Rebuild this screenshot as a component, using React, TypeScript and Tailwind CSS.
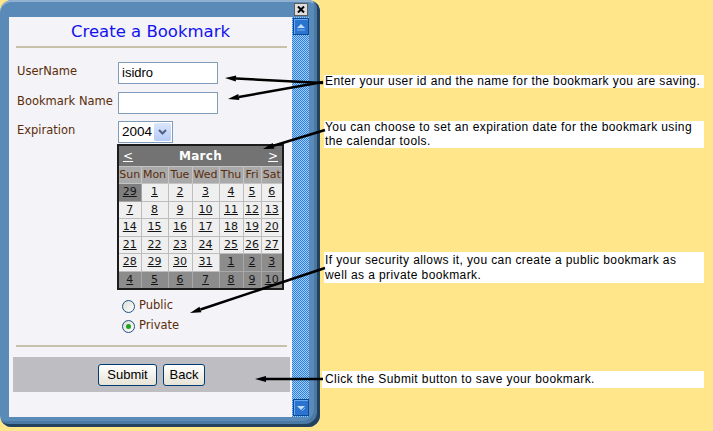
import React from 'react';

const sans = "font-['DejaVu_Sans',Verdana,sans-serif]";
const arial = "font-['Liberation_Sans',Arial,sans-serif]";

type Day = { n: number; other?: boolean; dim?: boolean };

const weeks: Day[][] = [
  [{ n: 29, other: true, dim: true }, { n: 1 }, { n: 2 }, { n: 3 }, { n: 4 }, { n: 5 }, { n: 6 }],
  [{ n: 7 }, { n: 8 }, { n: 9 }, { n: 10 }, { n: 11 }, { n: 12 }, { n: 13 }],
  [{ n: 14 }, { n: 15 }, { n: 16 }, { n: 17 }, { n: 18 }, { n: 19 }, { n: 20 }],
  [{ n: 21 }, { n: 22 }, { n: 23 }, { n: 24 }, { n: 25 }, { n: 26 }, { n: 27 }],
  [{ n: 28 }, { n: 29 }, { n: 30 }, { n: 31 }, { n: 1, other: true }, { n: 2, other: true }, { n: 3, other: true }],
  [4, 5, 6, 7, 8, 9, 10].map((n) => ({ n, other: true })),
];

const dayNames = ['Sun', 'Mon', 'Tue', 'Wed', 'Thu', 'Fri', 'Sat'];
const colWidths = [23, 27, 24, 27, 24, 18, 22];

const Calendar: React.FC = () => (
  <table className={`table-fixed border-collapse border-2 border-[#1c1c1c] ${sans} text-[11px] mt-[1px] -ml-[1px]`}>
    <colgroup>
      {colWidths.map((w, i) => (
        <col key={i} style={{ width: w }} />
      ))}
    </colgroup>
    <thead>
      <tr className="h-[21px] bg-[#737373]">
        <th colSpan={7} className="p-0">
          <div className="flex items-center justify-between px-[4px] text-white">
            <span className="underline text-[12px] font-normal">&lt;</span>
            <span className="font-bold text-[12px] tracking-[0.3px]">March</span>
            <span className="underline text-[12px] font-normal">&gt;</span>
          </div>
        </th>
      </tr>
      <tr className="h-[17px] bg-[#a9a9a9]">
        {dayNames.map((d) => (
          <th key={d} className="p-0 font-normal text-[#5a2c0a] border border-[#c4c4c4] text-center">
            {d}
          </th>
        ))}
      </tr>
    </thead>
    <tbody>
      {weeks.map((w, i) => (
        <tr key={i} className="h-[17px]">
          {w.map((d, j) => (
            <td
              key={j}
              className={`p-0 text-center underline text-[#151515] border ${
                d.dim
                  ? 'bg-[#7f7f7f] border-[#a4a4a4]'
                  : d.other
                  ? 'bg-[#8c8c8c] border-[#a8a8a8]'
                  : 'bg-[#efefef] border-[#bdbdbd]'
              }`}
            >
              {d.n}
            </td>
          ))}
        </tr>
      ))}
    </tbody>
  </table>
);

const Radio: React.FC<{ label: string; checked?: boolean }> = ({ label, checked }) => (
  <div className="flex items-center h-[20px] gap-[4px]">
    <span className="w-[13px] h-[13px] rounded-full border border-[#1d5281] bg-gradient-to-br from-[#dcdcd4] to-white flex items-center justify-center">
      {checked && <span className="w-[5px] h-[5px] rounded-full bg-[#21a121]" />}
    </span>
    <span className={`${sans} text-[11.5px] text-[#5a2c0a]`}>{label}</span>
  </div>
);

const XpButton: React.FC<{ label: string; w: string }> = ({ label, w }) => (
  <button
    className={`${w} h-[22px] rounded-[3px] border border-[#003c74] bg-gradient-to-b from-white to-[#e6e3d6] ${arial} text-[13px] text-black`}
  >
    {label}
  </button>
);

const ScrollButton: React.FC<{ up?: boolean }> = ({ up }) => (
  <div className="w-[16px] h-[17px] bg-[#2a74d0] border border-[#0d4a95] shadow-[inset_1px_1px_0_#6aa8ee] flex items-center justify-center">
    <svg width="10" height="8" viewBox="0 0 10 8">
      {up ? (
        <>
          <polygon points="5,1 9,5 1,5" fill="#bfdcfa" />
          <line x1="1" y1="7" x2="9" y2="7" stroke="#7fb2ea" strokeWidth="1" />
        </>
      ) : (
        <>
          <polygon points="1,2 9,2 5,6" fill="#bfdcfa" />
          <line x1="6" y1="7" x2="9" y2="4" stroke="#7fb2ea" strokeWidth="1" />
        </>
      )}
    </svg>
  </div>
);

const Arrow: React.FC<{ x1: number; y1: number; x2: number; y2: number }> = ({ x1, y1, x2, y2 }) => {
  const a = Math.atan2(y2 - y1, x2 - x1);
  const len = 11;
  const half = 3;
  const bx = x2 - Math.cos(a) * len;
  const by = y2 - Math.sin(a) * len;
  const px = -Math.sin(a) * half;
  const py = Math.cos(a) * half;
  return (
    <g>
      <line x1={x1} y1={y1} x2={bx} y2={by} stroke="#000" strokeWidth="2.5" />
      <polygon points={`${x2},${y2} ${bx + px},${by + py} ${bx - px},${by - py}`} fill="#000" />
    </g>
  );
};

const Note: React.FC<{ className: string; children: React.ReactNode }> = ({ className, children }) => (
  <div className={`bg-white ${arial} text-[12px] tracking-[0.4px] text-black pl-[1px] ${className}`}>{children}</div>
);

export default function App() {
  return (
    <div className="relative w-[713px] h-[431px] bg-[#ffe68a] overflow-hidden flex">
      {/* dialog window */}
      <div className="w-[320px] h-[427px] rounded-[12px] bg-[#5a8ab8] shadow-[inset_-3px_-3px_0_#23405c,inset_-6px_-6px_0_#4b79a5,inset_0_2px_0_#8fb0d0] flex flex-col">
        <div className="h-[17px] flex justify-end pr-[12px] pt-[3px]">
          <div className="w-[14px] h-[13px] bg-[#dedede] border border-[#5c5c5c] flex items-center justify-center">
            <svg width="8" height="7" viewBox="0 0 8 7">
              <path d="M1 0.5 L7 6.5 M7 0.5 L1 6.5" stroke="#000" strokeWidth="2" />
            </svg>
          </div>
        </div>
        <div className="flex h-[400px] pl-[9px]">
          {/* content panel */}
          <div className="w-[283px] bg-[#f4f3f7] flex flex-col">
            <h1 className={`${sans} text-[16.5px] text-[#1212ee] text-center mt-[5px] h-[20px] leading-[20px]`}>
              Create a Bookmark
            </h1>
            <div className="ml-[7px] w-[271px] h-[2px] bg-[#c7c0aa] mt-[4px]" />
            <div className="grid grid-cols-[101px_1fr] ml-[8px] mt-[14px] gap-y-[8px]">
              <div className={`${sans} text-[11.5px] text-[#5a2c0a] pt-[1px]`}>UserName</div>
              <div className={`w-[100px] h-[22px] border border-[#7f9db9] bg-white px-[3px] ${arial} text-[13px] leading-[20px]`}>
                isidro
              </div>
              <div className={`${sans} text-[11.5px] text-[#5a2c0a] pt-[1px]`}>Bookmark Name</div>
              <div className="w-[100px] h-[22px] border border-[#7f9db9] bg-white" />
              <div className={`${sans} text-[11.5px] text-[#5a2c0a] pt-[1px] -mt-[1px]`}>Expiration</div>
              <div className="-mt-[1px]">
                <div className="w-[55px] h-[22px] border border-[#7f9db9] bg-white flex items-center">
                  <span className={`${arial} text-[13.5px] pl-[3px] flex-1`}>2004</span>
                  <div className="w-[17px] h-[18px] mr-[1px] rounded-[2px] bg-gradient-to-b from-[#dbe6fc] to-[#b6cbf6] flex items-center justify-center">
                    <svg width="9" height="6" viewBox="0 0 9 6">
                      <path d="M1 1 L4.5 4.5 L8 1" fill="none" stroke="#4d6185" strokeWidth="2" />
                    </svg>
                  </div>
                </div>
                <Calendar />
                <div className="mt-[6px] ml-[4px] flex flex-col">
                  <Radio label="Public" />
                  <Radio label="Private" checked />
                </div>
              </div>
            </div>
            <div className="ml-[7px] w-[271px] h-[2px] bg-[#c7c0aa] mt-[9px]" />
            <div className="ml-[4px] w-[277px] h-[35px] bg-[#bebdc1] mt-[10px] flex items-center justify-center gap-[6px]">
              <XpButton label="Submit" w="w-[59px]" />
              <XpButton label="Back" w="w-[42px]" />
            </div>
          </div>
          {/* scrollbar */}
          <div className="w-[17px] flex flex-col justify-between bg-[repeating-conic-gradient(#2b80e2_0%_25%,#a3ccf5_0%_50%)] bg-[length:2px_2px] pl-[1px] py-[1px]">
            <ScrollButton up />
            <ScrollButton />
          </div>
        </div>
      </div>

      {/* annotations */}
      <div className="flex flex-col ml-[4px] w-[380px]">
        <Note className="mt-[75px] h-[13px] leading-[13px]">
          Enter your user id and the name for the bookmark you are saving.
        </Note>
        <Note className="mt-[33px] h-[27px] leading-[13.5px]">
          You can choose to set an expiration date for the bookmark using
          <br />
          the calendar tools.
        </Note>
        <Note className="mt-[104px] h-[31px] leading-[15px] pt-[1px]">
          If your security allows it, you can create a public bookmark as
          <br />
          well as a private bookmark.
        </Note>
        <Note className="mt-[88px] h-[17px] leading-[17px] -ml-[2px] w-[382px] pl-[3px]">
          Click the Submit button to save your bookmark.
        </Note>
      </div>

      {/* callout arrows */}
      <svg className="absolute inset-0 pointer-events-none" width="713" height="431">
        <Arrow x1={323} y1={83} x2={225} y2={78} />
        <Arrow x1={323} y1={82} x2={228} y2={99} />
        <Arrow x1={325} y1={130} x2={263} y2={149} />
        <Arrow x1={325} y1={268} x2={190} y2={313} />
        <Arrow x1={323} y1={379} x2={255} y2={379} />
      </svg>
    </div>
  );
}
